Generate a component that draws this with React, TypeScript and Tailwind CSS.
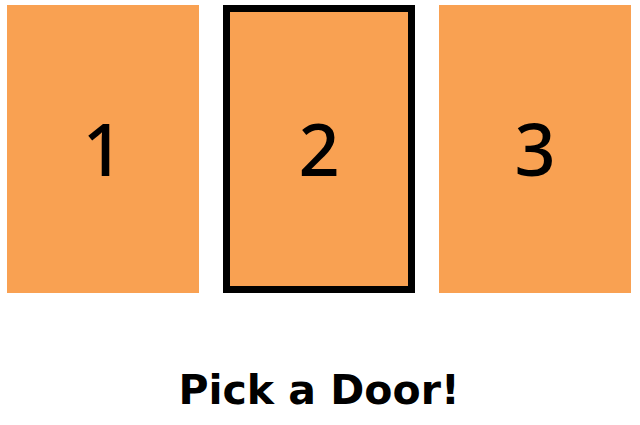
const doors = [1, 2, 3];

export default function App() {
  const selected = 2;

  return (
    <div className="w-[640px] h-[425px] bg-white pt-[5px] pl-[7px]">
      <div className="flex gap-6">
        {doors.map((door) => (
          <div
            key={door}
            className={`w-[192px] h-[288px] bg-[#f9a152] flex items-center justify-center ${
              door === selected ? 'border-[7px] border-black' : ''
            }`}
          >
            <span
              className="text-[72px] leading-none font-medium text-black -mt-[2px]"
              style={{ fontFamily: '"Noto Sans", sans-serif' }}
            >
              {door}
            </span>
          </div>
        ))}
      </div>
      <div
        className="mt-[77px] w-[624px] text-center text-[41px] leading-none font-bold text-black"
        style={{ fontFamily: '"DejaVu Sans", sans-serif' }}
      >
        Pick a Door!
      </div>
    </div>
  );
}
